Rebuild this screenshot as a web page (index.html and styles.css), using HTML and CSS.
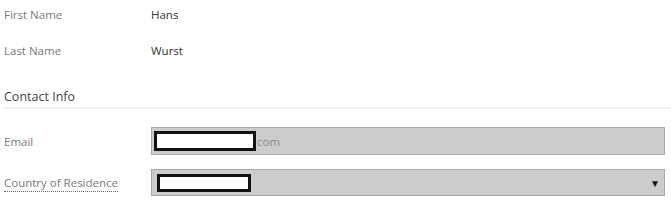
FILE: index.html
```html
<!DOCTYPE html>
<html>
<head>
<meta charset="utf-8">
<link rel="stylesheet" href="styles.css">
</head>
<body>
<div class="form">
  <div class="row static">
    <div class="label">First Name</div>
    <div class="value">Hans</div>
  </div>
  <div class="row static">
    <div class="label">Last Name</div>
    <div class="value">Wurst</div>
  </div>
  <div class="section">
    <div class="section-title">Contact Info</div>
  </div>
  <div class="row field-row email-row">
    <div class="label">Email</div>
    <div class="field">
      <span class="redact redact-email"></span><span class="suffix">com</span>
    </div>
  </div>
  <div class="row field-row select-row">
    <div class="label"><span class="dotted">Country of Residence</span></div>
    <div class="field select">
      <span class="redact redact-country"></span>
      <span class="arrow">▼</span>
    </div>
  </div>
</div>
</body>
</html>
```
FILE: styles.css
```css
html, body {
  margin: 0;
  padding: 0;
  background: #fff;
}
body {
  font-family: "Open Sans", "Noto Sans", sans-serif;
  font-size: 11.5px;
  color: #333;
}
.form {
  display: flex;
  flex-direction: column;
  padding: 0 6px 0 4px;
}
.row {
  display: grid;
  grid-template-columns: 147px 1fr;
  align-items: center;
}
.static {
  height: 28px;
}
.static + .static {
  margin-top: 8px;
}
.label {
  color: #7a7a7a;
}
.value {
  color: #333;
}
.section {
  margin-top: 24px;
  border-bottom: 2px solid #f0f0f0;
  padding-bottom: 1px;
  margin-right: -6px;
}
.section-title {
  font-size: 12.5px;
  color: #444;
  line-height: 18px;
}
.field-row {
  height: 28px;
}
.email-row {
  margin-top: 18px;
}
.select-row {
  margin-top: 14px;
  height: 27px;
}
.dotted {
  border-bottom: 1px dotted #666;
  padding-bottom: 1px;
}
.field {
  height: 100%;
  box-sizing: border-box;
  background: #cccccc;
  border: 1px solid #a8a8a8;
  display: flex;
  align-items: center;
  padding-left: 2px;
}
.redact {
  display: block;
  box-sizing: border-box;
  background: #fff;
  border: 3px solid #111;
}
.redact-email {
  width: 102px;
  height: 20px;
}
.redact-country {
  width: 94px;
  height: 18px;
  margin-left: 3px;
}
.suffix {
  color: #8a8a8a;
  font-size: 11.5px;
  margin-left: 1px;
}
.select {
  justify-content: space-between;
  padding-right: 4px;
}
.arrow {
  font-size: 10px;
  color: #111;
}
```
